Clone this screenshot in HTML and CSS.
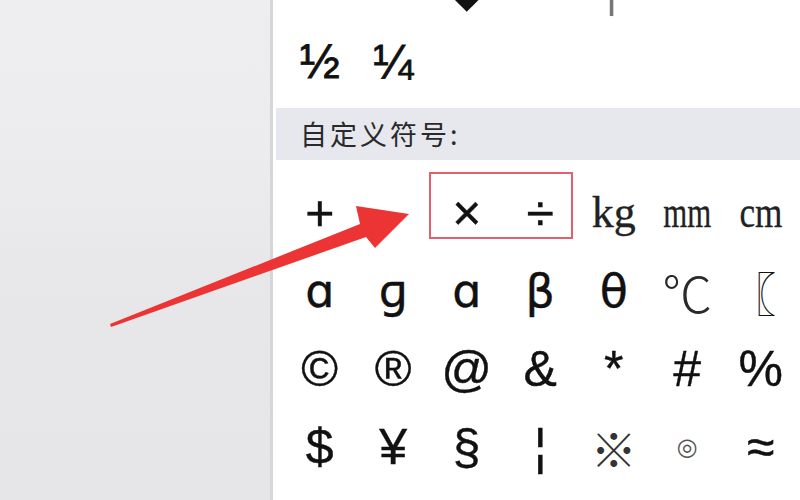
FILE: index.html
```html
<!DOCTYPE html>
<html lang="zh-CN">
<head>
<meta charset="utf-8">
<title>符号</title>
<link rel="stylesheet" href="styles.css">
</head>
<body>
<div class="screen">
  <aside class="side"></aside>
  <main class="panel">
    <div class="grid recent">
      <span class="cell faint">¤</span>
      <span class="cell"></span>
      <span class="cell cjk">◆</span>
      <span class="cell"></span>
      <span class="cell gray">│</span>
      <span class="cell"></span>
      <span class="cell faint">…</span>
      <span class="cell frac">½</span>
      <span class="cell frac">¼</span>
    </div>
    <div class="head">自定义符号:</div>
    <div class="grid custom">
      <span class="cell">+</span>
      <span class="cell"></span>
      <span class="cell">×</span>
      <span class="cell">÷</span>
      <span class="cell serif">kg</span>
      <span class="cell serif"><span class="mm">mm</span></span>
      <span class="cell serif"><span class="cm">cm</span></span>

      <span class="cell greek">ɑ</span>
      <span class="cell greek">ɡ</span>
      <span class="cell greek">ɑ</span>
      <span class="cell greek">β</span>
      <span class="cell greek">θ</span>
      <span class="cell cjk light">℃</span>
      <span class="cell cjk bracket">〖</span>

      <span class="cell">©</span>
      <span class="cell">®</span>
      <span class="cell">@</span>
      <span class="cell">&amp;</span>
      <span class="cell">*</span>
      <span class="cell">#</span>
      <span class="cell">%</span>

      <span class="cell">$</span>
      <span class="cell">¥</span>
      <span class="cell">§</span>
      <span class="cell">¦</span>
      <span class="cell cjk ref">※</span>
      <span class="cell small">◎</span>
      <span class="cell">≈</span>
    </div>
  </main>
  <div class="mark-box"></div>
  <svg class="arrow" width="800" height="500" viewBox="0 0 800 500">
    <polygon points="110,324 360,224 356,206 409,214 375,248 366,237 111,327" fill="#ec3434"/>
  </svg>
</div>
</body>
</html>
```

FILE: styles.css
```css
* { box-sizing: border-box; }
html, body { margin: 0; padding: 0; }
body { width: 800px; height: 500px; overflow: hidden; background: #fff; }

.screen {
  position: relative;
  display: flex;
  width: 800px;
  height: 500px;
  overflow: hidden;
}

.side {
  flex: 0 0 273px;
  background: linear-gradient(#eeeef0, #ececee 30%, #e7e7ea 60%, #e6e6e9);
  border-right: 3px solid #d6d6d9;
}

.panel {
  flex: 1;
  background: #fff;
  overflow: hidden;
}

.grid {
  display: grid;
  grid-template-columns: repeat(7, 73.5px);
  grid-auto-rows: 78px;
  margin-left: 10px;
}

.recent { margin-top: -55px; }

.cell {
  display: flex;
  align-items: center;
  justify-content: center;
  font-family: "Liberation Sans", Arial, sans-serif;
  font-size: 50px;
  color: #111;
  line-height: 1;
  -webkit-text-stroke: 0.4px #111;
}

.frac { font-size: 48px; -webkit-text-stroke: 0.8px #111; }
.faint { color: #e8e2dc; font-size: 30px; -webkit-text-stroke: 0; }
.gray { color: #777; -webkit-text-stroke: 0; }

.head {
  margin: 7px 0 0 3px;
  height: 52px;
  background: #e6e8ee;
  padding-left: 24px;
  font-family: "Noto Sans CJK SC", "Liberation Sans", sans-serif;
  font-size: 27px;
  line-height: 52px;
  color: #2a2a2a;
  letter-spacing: 3px;
}

.custom { margin-top: 14px; }

.serif {
  font-family: "Liberation Serif", "Times New Roman", serif;
  font-size: 44px;
  color: #222;
  -webkit-text-stroke: 0.3px #222;
}
.mm { display: inline-block; transform: scaleX(0.7); }
.cm { display: inline-block; transform: scaleX(0.8); }

.greek { font-family: "DejaVu Sans", sans-serif; font-size: 46px; }
.cjk { font-family: "Noto Sans CJK SC", sans-serif; -webkit-text-stroke: 0; font-weight: 400; }
.light { color: #2a2a2a; font-weight: 300; }
.bracket { font-size: 46px; justify-content: flex-start; padding-left: 6px; }
.ref { font-size: 46px; font-weight: 300; color: #333; }
.small { font-size: 24px; color: #555; font-family: "DejaVu Sans", sans-serif; -webkit-text-stroke: 0; }

.mark-box {
  position: absolute;
  left: 429px;
  top: 172px;
  width: 144px;
  height: 67px;
  border: 2px solid #e0606c;
}

.arrow {
  position: absolute;
  left: 0;
  top: 0;
  pointer-events: none;
}
```
